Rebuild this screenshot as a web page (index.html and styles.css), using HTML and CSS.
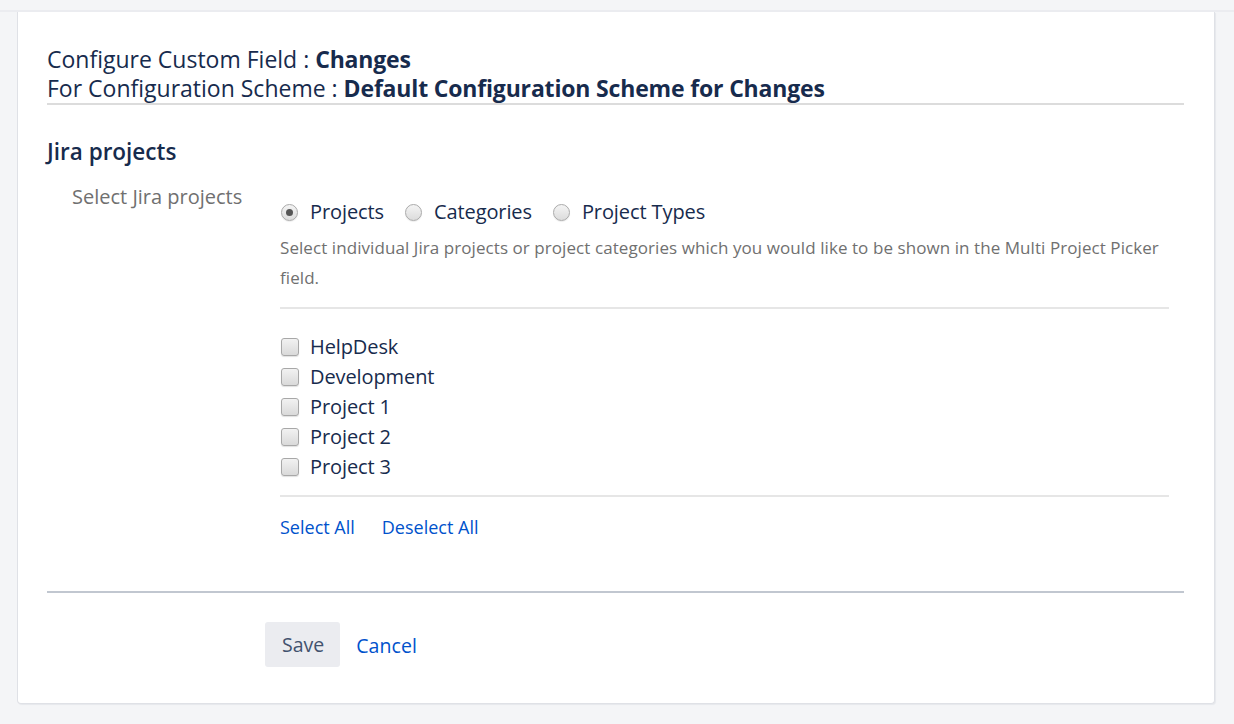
FILE: index.html
```html
<!DOCTYPE html>
<html lang="en">
<head>
<meta charset="utf-8">
<title>Configure Custom Field</title>
<link rel="stylesheet" href="styles.css">
</head>
<body>
<div class="topline"></div>
<main class="card">
  <header class="title">
    <div>Configure Custom Field : <strong>Changes</strong></div>
    <div>For Configuration Scheme : <strong>Default Configuration Scheme for Changes</strong></div>
  </header>

  <h3 class="section">Jira projects</h3>

  <div class="field">
    <label class="field-label">Select Jira projects</label>
    <div class="field-body">
      <div class="radios">
        <label class="opt"><span class="radio checked"></span>Projects</label>
        <label class="opt"><span class="radio"></span>Categories</label>
        <label class="opt"><span class="radio"></span>Project Types</label>
      </div>
      <p class="desc">Select individual Jira projects or project categories which you would like to be shown in the Multi Project Picker field.</p>
      <hr class="rule">
      <ul class="checks">
        <li><span class="cb"></span>HelpDesk</li>
        <li><span class="cb"></span>Development</li>
        <li><span class="cb"></span>Project 1</li>
        <li><span class="cb"></span>Project 2</li>
        <li><span class="cb"></span>Project 3</li>
      </ul>
      <hr class="rule rule2">
      <div class="links">
        <a href="#">Select All</a>
        <a href="#">Deselect All</a>
      </div>
    </div>
  </div>

  <div class="buttons">
    <button class="save">Save</button>
    <a href="#" class="cancel">Cancel</a>
  </div>
</main>
</body>
</html>
```

FILE: styles.css
```css
html, body {
  margin: 0;
  padding: 0;
}
body {
  background: #f4f5f7;
  font-family: "Open Sans", "Noto Sans", sans-serif;
  color: #172b4d;
  height: 724px;
  overflow: hidden;
}
.topline {
  height: 10px;
  border-bottom: 2px solid #ebecf0;
}
.card {
  margin-left: 17px;
  width: 1198px;
  height: 692px;
  background: #fff;
  border: 1px solid #dfe1e6;
  border-top: none;
  border-radius: 0 0 4px 4px;
  box-shadow: 1px 1px 1px rgba(9, 30, 66, 0.06);
  padding: 33px 30px 0 29px;
  box-sizing: border-box;
}
.title {
  font-size: 23px;
  line-height: 29px;
  color: #172b4d;
  border-bottom: 2px solid #dcdcdc;
}
.title strong {
  font-weight: 700;
  letter-spacing: -0.17px;
}
.section {
  margin: 32px 0 0;
  font-size: 22.5px;
  line-height: 30px;
  font-weight: 600;
}
.field {
  display: grid;
  grid-template-columns: 208px 1fr;
  padding-left: 25px;
  margin-top: 15px;
}
.field-label {
  font-size: 20px;
  line-height: 30px;
  color: #707070;
}
.field-body {
  padding-top: 15px;
  margin-right: 15px;
}
.radios {
  display: flex;
  gap: 20px;
  font-size: 20px;
  line-height: 30px;
  letter-spacing: -0.1px;
}
.opt {
  display: flex;
  align-items: center;
}
.radio {
  width: 15px;
  height: 15px;
  border-radius: 50%;
  border: 1px solid #aaa;
  background: linear-gradient(#f4f4f4, #dcdcdc);
  margin: 0 12px 0 1px;
  position: relative;
  box-shadow: 0 1px 1px rgba(0,0,0,0.08);
}
.radio.checked::after {
  content: "";
  position: absolute;
  left: 4px;
  top: 4px;
  width: 7px;
  height: 7px;
  border-radius: 50%;
  background: #555;
}
.desc {
  margin: 6px 0 0;
  font-size: 17px;
  line-height: 30px;
  color: #707070;
  letter-spacing: 0.07px;
}
.rule {
  border: none;
  border-top: 2px solid #e6e6e6;
  margin: 14px 0 0;
}
.checks {
  list-style: none;
  margin: 23px 0 0;
  padding: 0;
  font-size: 20px;
  line-height: 30px;
  letter-spacing: -0.1px;
}
.checks li {
  display: flex;
  align-items: center;
}
.cb {
  width: 16px;
  height: 16px;
  border: 1px solid #a8a8a8;
  border-radius: 3px;
  background: linear-gradient(#f2f2f2, #dadada);
  box-shadow: 0 1px 1px rgba(0,0,0,0.12);
  margin: 0 11px 0 1px;
}
.rule2 {
  margin-top: 13px;
}
.links {
  display: flex;
  gap: 27px;
  margin-top: 15px;
  font-size: 18px;
  line-height: 30px;
}
.links a, .cancel {
  color: #0052cc;
  text-decoration: none;
}
.buttons {
  margin-top: 49px;
  border-top: 2px solid #c1c7d0;
  padding: 29px 0 0 218px;
  display: flex;
  align-items: center;
  gap: 16px;
}
.save {
  font-family: inherit;
  font-size: 19.5px;
  color: #42526e;
  background: #ebecf0;
  border: none;
  border-radius: 3px;
  height: 45px;
  padding: 0 16px 0 17px;
}
.cancel {
  font-size: 19.5px;
  padding-top: 2px;
  letter-spacing: 0.1px;
}
```
